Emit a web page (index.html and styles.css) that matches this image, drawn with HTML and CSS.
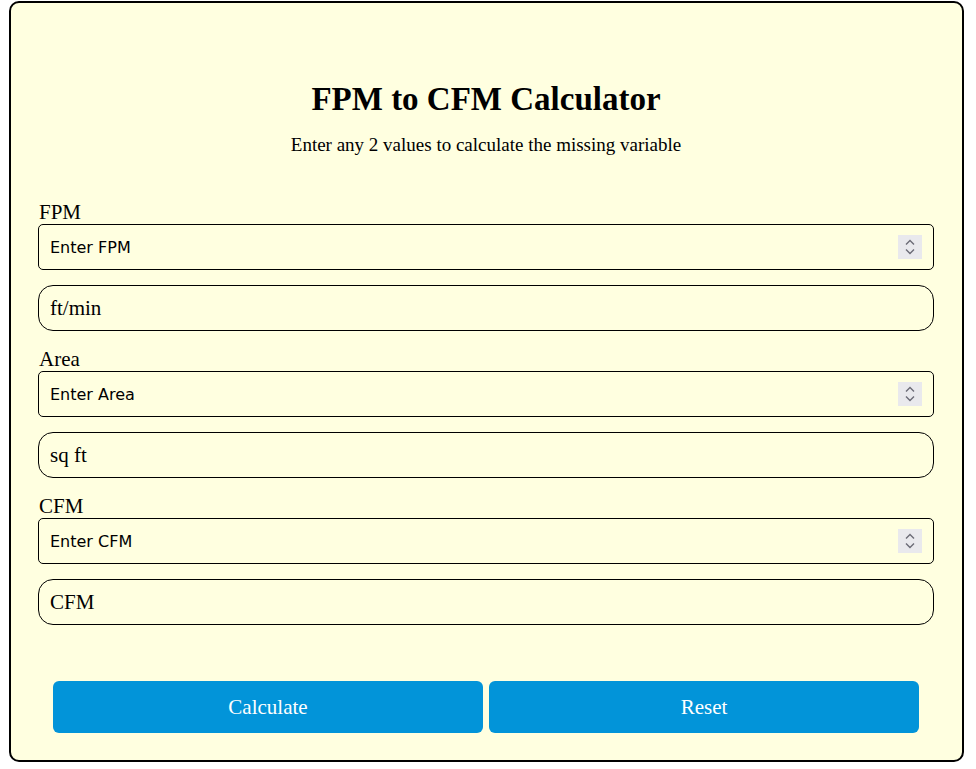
FILE: index.html
```html
<!DOCTYPE html>
<html lang="en">
<head>
    <meta charset="UTF-8">
    <meta name="viewport" content="width=device-width, initial-scale=1.0">
    <title>FPM to CFM Calculator</title>
    <link rel="stylesheet" href="styles.css">
</head>
<body>
    <div class="calculator">
        <h1>FPM to CFM Calculator</h1>
        <p class="subtitle">Enter any 2 values to calculate the missing variable</p>
        <form id="calcForm">
            <div class="field">
                <label for="fpm">FPM</label>
                <div class="num-wrap">
                    <input type="text" id="fpm" placeholder="Enter FPM">
                    <span class="spin"><svg width="12" height="18" viewBox="0 0 12 18"><path d="M2 6.5 6 2.5 10 6.5M2 11.5 6 15.5 10 11.5" fill="none" stroke="#6b6b76" stroke-width="1.4"/></svg></span>
                </div>
                <select class="unit"><option>ft/min</option></select>
            </div>
            <div class="field">
                <label for="area">Area</label>
                <div class="num-wrap">
                    <input type="text" id="area" placeholder="Enter Area">
                    <span class="spin"><svg width="12" height="18" viewBox="0 0 12 18"><path d="M2 6.5 6 2.5 10 6.5M2 11.5 6 15.5 10 11.5" fill="none" stroke="#6b6b76" stroke-width="1.4"/></svg></span>
                </div>
                <select class="unit"><option>sq ft</option></select>
            </div>
            <div class="field">
                <label for="cfm">CFM</label>
                <div class="num-wrap">
                    <input type="text" id="cfm" placeholder="Enter CFM">
                    <span class="spin"><svg width="12" height="18" viewBox="0 0 12 18"><path d="M2 6.5 6 2.5 10 6.5M2 11.5 6 15.5 10 11.5" fill="none" stroke="#6b6b76" stroke-width="1.4"/></svg></span>
                </div>
                <select class="unit"><option>CFM</option></select>
            </div>
            <div class="buttons">
                <button type="button" class="btn">Calculate</button>
                <button type="reset" class="btn">Reset</button>
            </div>
        </form>
    </div>
</body>
</html>
```

FILE: styles.css
```css
* {
    box-sizing: border-box;
}
body {
    margin: 0;
    background: #fff;
    font-family: "Liberation Serif", "Times New Roman", serif;
    color: #000;
}
.calculator {
    margin: 1px 12px 0 9px;
    height: 761px;
    background-color: #ffffe0;
    border: 2px solid #000;
    border-radius: 10px;
    padding: 0 28px 26px 27px;
}
h1 {
    font-size: 33px;
    text-align: center;
    margin: 78px 0 0;
    line-height: 37px;
}
.subtitle {
    font-size: 19px;
    text-align: center;
    margin: 16px 0 0;
    line-height: 21px;
}
form {
    margin-top: 45px;
}
.field {
    margin-bottom: 16px;
}
.field label {
    display: block;
    font-size: 21px;
    line-height: 24px;
    padding-left: 1px;
}
.num-wrap {
    position: relative;
}
.num-wrap input {
    display: block;
    width: 100%;
    height: 46px;
    padding: 0 11px;
    border: 1px solid #000;
    border-radius: 5px;
    background: transparent;
    font-family: "DejaVu Sans", sans-serif;
    font-size: 16px;
    outline: none;
}
.num-wrap input::placeholder {
    color: #000;
}
.spin {
    position: absolute;
    right: 12px;
    top: 11px;
    width: 24px;
    height: 24px;
    background: #e9e9ed;
    display: flex;
    align-items: center;
    justify-content: center;
}
.unit {
    display: block;
    width: 100%;
    height: 46px;
    margin-top: 15px;
    padding: 0 11px;
    border: 1px solid #000;
    border-radius: 15px;
    background: transparent;
    font-family: inherit;
    font-size: 21px;
    color: #000;
    appearance: none;
    -webkit-appearance: none;
}
.buttons {
    display: flex;
    gap: 6px;
    padding: 0 15px;
    margin-top: 56px;
}
.btn {
    flex: 1;
    height: 52px;
    border: none;
    border-radius: 6px;
    background-color: #0294d9;
    color: #fff;
    font-family: inherit;
    font-size: 21px;
    cursor: pointer;
}
.btn:hover {
    background-color: #0279b3;
}
```
